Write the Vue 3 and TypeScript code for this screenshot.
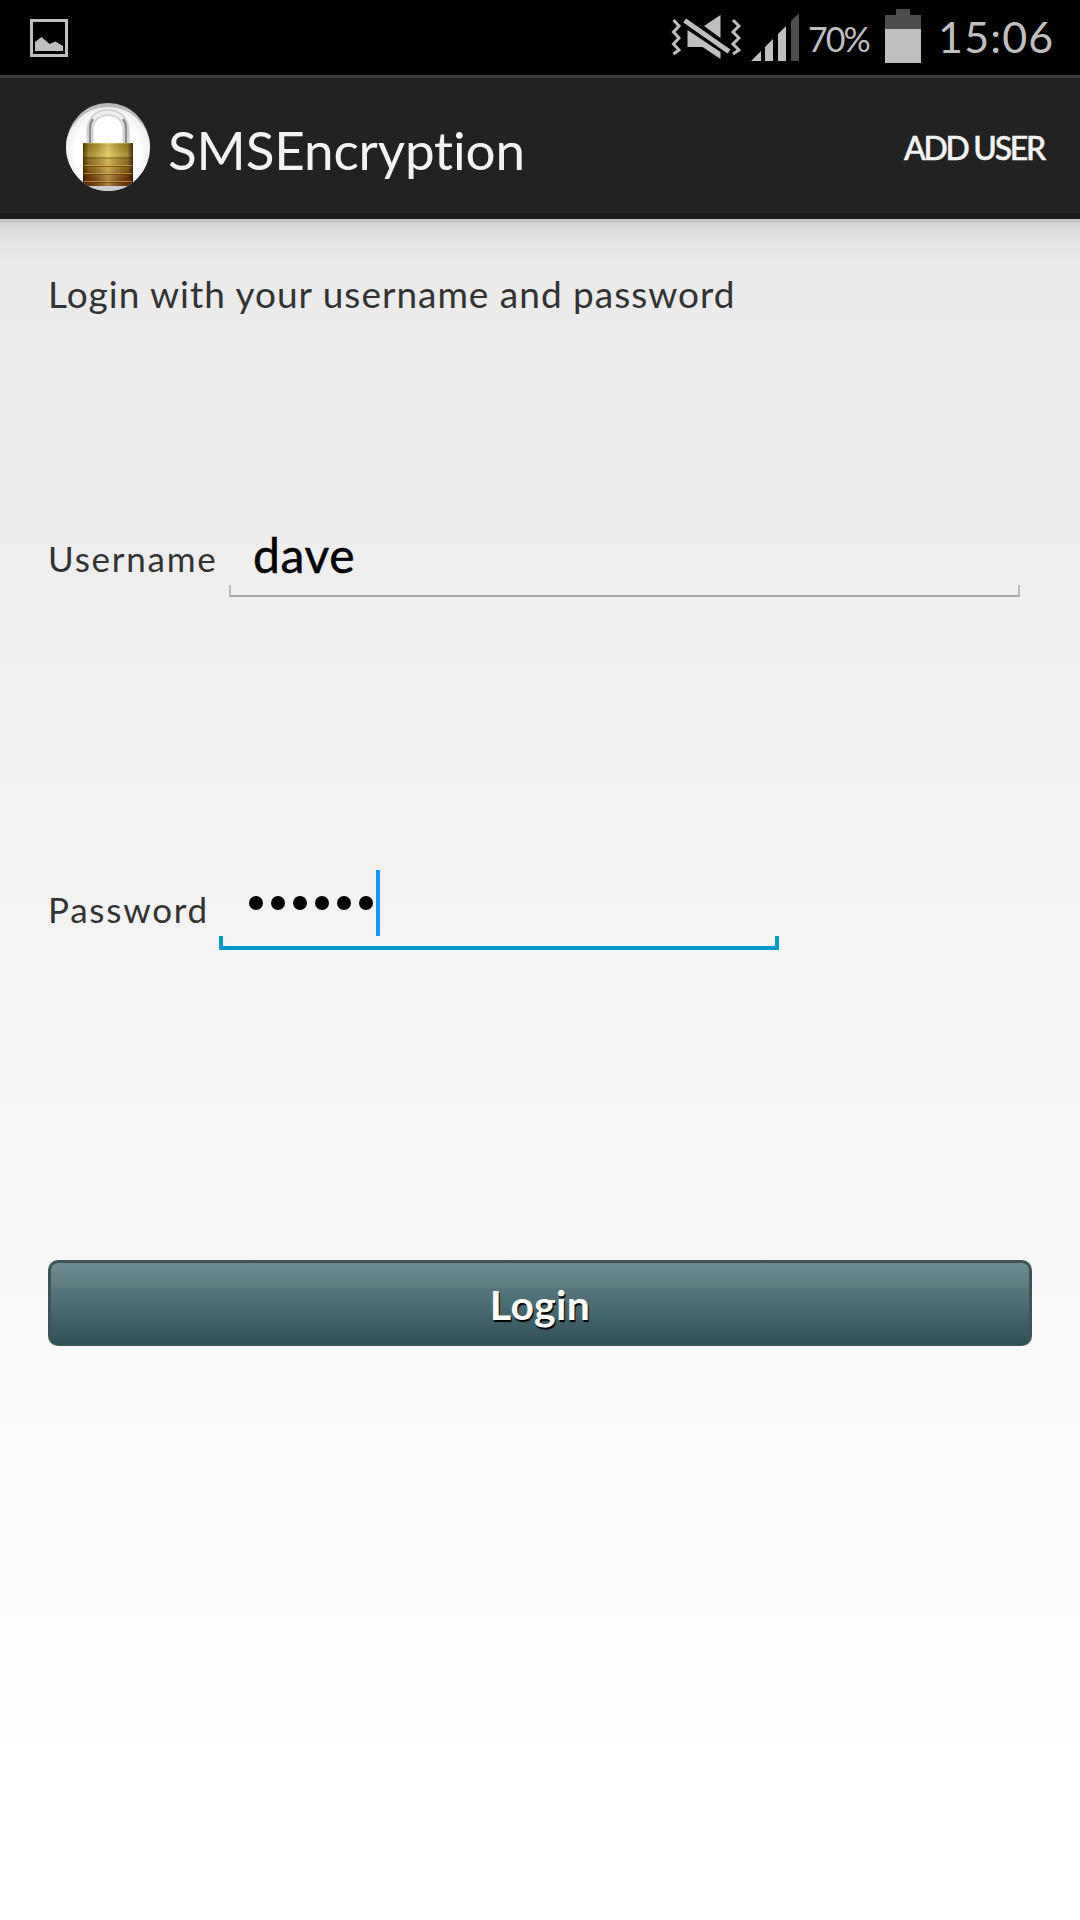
<script setup lang="ts">
import { ref } from 'vue'

const username = ref('dave')
const passwordLength = ref(6)
const battery = ref(70)
const clock = ref('15:06')
</script>

<template>
  <div class="screen">
    <header class="status">
      <svg class="picture" width="38" height="38" viewBox="0 0 38 38">
        <rect x="1.5" y="1.5" width="35" height="35" fill="none" stroke="#bfbfbf" stroke-width="3" />
        <path d="M5 32V23L11.500 18L19.500 25L25.500 22.500L33 27V32Z" fill="#bfbfbf" />
      </svg>
      <span class="grow"></span>
      <svg class="mute" width="70" height="46" viewBox="0 0 70 46">
        <g fill="none" stroke="#bfbfbf" stroke-width="3">
          <path d="M2.500 6L8 12L2.500 18L8 24L2.500 30L8 36L2.500 40" />
          <path d="M62 6L68 12L62 18L68 24L62 30L68 36L62 40" />
        </g>
        <path d="M16.500 16L49.500 38V45L31.500 33H16.500Z" fill="#bfbfbf" />
        <path d="M33 12L49.500 1V24Z" fill="#bfbfbf" />
        <path d="M14.500 7L58.500 37" stroke="#000" stroke-width="9" />
        <path d="M13.700 6.500L58 37.500" stroke="#bfbfbf" stroke-width="5" />
      </svg>
      <svg class="signal" width="48" height="48" viewBox="0 0 48 48">
        <path d="M0 48L10 38V48ZM14 48V34L22 26V48ZM27 48V21L35 13V48Z" fill="#bfbfbf" />
        <path d="M40 48V8L48 0V48Z" fill="#4d4d4d" />
      </svg>
      <span class="percent">{{ battery }}%</span>
      <svg class="battery" width="36" height="54" viewBox="0 0 36 54">
        <path d="M11 0H25V6H36V20H0V6H11Z" fill="#4d4d4d" />
        <rect y="20" width="36" height="34" fill="#bfbfbf" />
      </svg>
      <span class="clock">{{ clock }}</span>
    </header>

    <nav class="bar">
      <svg class="logo" width="84" height="90" viewBox="0 0 84 90">
        <defs>
          <clipPath id="disc"><ellipse cx="42" cy="44" rx="42" ry="44" /></clipPath>
          <linearGradient id="brass" x2="0" y2="1">
            <stop offset="0" stop-color="#e0ce62" />
            <stop offset=".04" stop-color="#b08f2a" />
            <stop offset=".3" stop-color="#d2c154" />
            <stop offset=".36" stop-color="#ad9036" />
            <stop offset=".55" stop-color="#a7822c" />
            <stop offset=".8" stop-color="#76420f" />
            <stop offset="1" stop-color="#6d2d06" />
          </linearGradient>
          <linearGradient id="edges">
            <stop offset="0" stop-color="#2a1200" stop-opacity=".75" />
            <stop offset=".12" stop-color="#4a2800" stop-opacity=".3" />
            <stop offset=".5" stop-color="#fff29a" stop-opacity=".42" />
            <stop offset=".88" stop-color="#4a2800" stop-opacity=".3" />
            <stop offset="1" stop-color="#2a1200" stop-opacity=".8" />
          </linearGradient>
          <radialGradient id="face">
            <stop offset=".75" stop-color="#fff" />
            <stop offset="1" stop-color="#eee" />
          </radialGradient>
        </defs>
        <g clip-path="url(#disc)">
          <rect width="84" height="90" fill="#b9b9b9" />
          <ellipse cx="42" cy="48" rx="43" ry="44" fill="url(#face)" />
          <path d="M24 42V27C24 3.500 60 3.500 60 27V42" fill="none" stroke="#d2d2d2" stroke-width="7" />
          <path d="M24 42V27C24 3.500 60 3.500 60 27V42" fill="none" stroke="#ededed" stroke-width="3.500" />
          <path d="M24 42V25Q24 20 27 16M60 42V25Q60 20 57 16" fill="none" stroke="#8e8e8e" stroke-width="2.500" />
          <path d="M17 83H67V90H17Z" fill="#ccc" />
          <rect x="17" y="40" width="50" height="43" fill="url(#brass)" />
          <rect x="17" y="40" width="50" height="43" fill="url(#edges)" />
          <path d="M17 55H67M17 63.500H67M17 71.500H67M17 79.500H67" stroke="#5a3206" stroke-width="1" opacity=".6" />
          <path d="M18 62.500H66M18 70.500H66M18 78.500H66" stroke="#e2b455" stroke-width="1" opacity=".6" />
        </g>
      </svg>
      <h1 class="title">SMSEncryption</h1>
      <span class="grow"></span>
      <span class="add">ADD USER</span>
    </nav>

    <main class="content">
      <p class="intro">Login with your username and password</p>
      <div class="row user-row">
        <label class="label user-label">Username</label>
        <div class="field user-field"><span class="value">{{ username }}</span></div>
      </div>
      <div class="row pass-row">
        <label class="label pass-label">Password</label>
        <div class="field pass-field">
          <i v-for="n in passwordLength" :key="n" class="dot"></i>
          <i class="caret"></i>
        </div>
      </div>
      <div class="login"><span>Login</span></div>
    </main>
  </div>
</template>

<style>
body { margin: 0; }
</style>

<style scoped>
.screen {
  width: 1080px;
  height: 1920px;
  overflow: hidden;
  display: flex;
  flex-direction: column;
  font-family: Lato, "Open Sans", sans-serif;
  color: #333;
  white-space: nowrap;
}
.grow { flex: 1; }
.status {
  height: 75px;
  flex: none;
  display: flex;
  align-items: flex-start;
  background: #000;
  color: #bfbfbf;
}
.picture { margin: 19px 0 0 30px; }
.mute { margin: 14px 10px 0 0; }
.signal { margin: 13px 9px 0 0; }
.percent {
  width: 77px;
  font-size: 34px;
  line-height: 40px;
  margin-top: 19px;
  letter-spacing: -2px;
}
.battery { margin: 9px 17px 0 0; }
.clock {
  width: 142px;
  font-size: 43px;
  line-height: 50px;
  margin-top: 12px;
  letter-spacing: 1.2px;
}
.bar {
  height: 135px;
  box-sizing: content-box;
  flex: none;
  display: flex;
  align-items: flex-start;
  border-top: 3px solid #393939;
  border-bottom: 6px solid #1b1b1b;
  background: #222;
  color: #f3f3f3;
}
.logo { margin: 25px 0 0 66px; }
.title {
  margin: 40px 0 0 18px;
  font-size: 53px;
  line-height: 64px;
  font-weight: 400;
  letter-spacing: -0.15px;
}
.add {
  width: 176px;
  margin-top: 50px;
  font-size: 32px;
  line-height: 40px;
  font-weight: 500;
  letter-spacing: -2.3px;
  -webkit-text-stroke: 0.5px #f3f3f3;
}
.content {
  flex: 1;
  padding: 53px 48px 0;
  background:
    linear-gradient(#c4c4c4 0 3px, transparent 3px),
    linear-gradient(#cecece, #dcdcdc 12px, #e5e5e5 24px, rgba(234, 234, 234, 0) 42px),
    linear-gradient(#eaeaea, #eeeeee 20%, #f3f3f3 40%, #f8f8f8 62%, #fff 92%);
}
.intro {
  margin: 0;
  font-size: 37px;
  line-height: 44px;
  letter-spacing: 1px;
}
.row { display: flex; align-items: stretch; }
.user-row { height: 72px; margin-top: 209px; }
.pass-row { height: 80px; margin-top: 273px; }
.label { font-size: 35px; line-height: 44px; letter-spacing: 1.75px; }
.user-label { width: 181px; padding-top: 11px; box-sizing: border-box; }
.pass-label { width: 171px; padding-top: 17px; box-sizing: border-box; }
.field { position: relative; display: flex; }
.field::after {
  content: "";
  position: absolute;
  left: 0;
  right: 0;
  bottom: 0;
}
.user-field { width: 791px; }
.user-field::after {
  height: 10px;
  border: 2px solid #bbb;
  border-bottom-color: #a6a6a6;
  border-top: 0;
}
.value {
  margin: 0 0 0 24px;
  font-size: 48px;
  line-height: 60px;
  letter-spacing: 0.6px;
  color: #000;
  -webkit-text-stroke: 0.5px #000;
}
.pass-field { width: 560px; }
.pass-field::after {
  height: 10px;
  border: 4px solid #0099cc;
  border-top: 0;
}
.dot {
  width: 14px;
  height: 14px;
  margin: 26px 8px 0 0;
  border-radius: 50%;
  background: #000;
}
.dot:first-child { margin-left: 30px; }
.caret {
  width: 4px;
  height: 66px;
  margin-left: -5px;
  background: #1199ff;
}
.login {
  box-sizing: border-box;
  height: 86px;
  margin-top: 310px;
  border: 3px solid #3d5557;
  border-bottom-width: 1px;
  border-radius: 10px;
  background: linear-gradient(#6d8b92, #607c81 27%, #55767c 32%, #33535b 95%);
  text-align: center;
  font-size: 41px;
  line-height: 50px;
  font-weight: 700;
  letter-spacing: 0.3px;
  color: #fff;
  text-shadow: 1px 2px 1px #000;
}
.login span { display: block; padding-top: 17px; }
</style>
